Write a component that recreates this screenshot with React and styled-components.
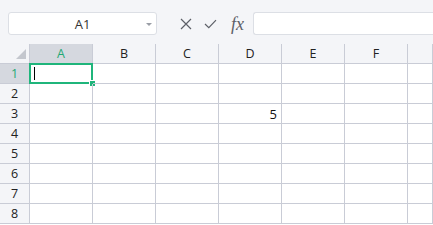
import React from 'react';
import styled, { createGlobalStyle } from 'styled-components';

const GlobalStyle = createGlobalStyle`
    html, body {
        margin: 0;
        padding: 0;
        background: #ffffff;
        overflow: hidden;
    }
    body {
        font-family: "Open Sans", "Noto Sans", sans-serif;
    }
`;

const columns = ['A', 'B', 'C', 'D', 'E', 'F', ''];
const rows = [1, 2, 3, 4, 5, 6, 7, 8];
const values = { D3: '5' };

const Page = styled.div`
    width: 433px;
    height: 225px;
    overflow: hidden;
    display: flex;
    flex-direction: column;
`;

const Toolbar = styled.div`
    height: 44px;
    box-sizing: border-box;
    padding: 12px 0 9px 8px;
    background: #f4f5f8;
    display: flex;
    align-items: stretch;
`;

const NameBox = styled.div`
    width: 149px;
    box-sizing: border-box;
    background: #fff;
    border: 1px solid #dcdfe5;
    border-radius: 3px;
    display: flex;
    align-items: center;
    justify-content: center;
    position: relative;
    font-size: 13px;
    color: #333;
`;

const Caret = styled.span`
    position: absolute;
    right: 4px;
    top: 10px;
    width: 0;
    height: 0;
    border-left: 3px solid transparent;
    border-right: 3px solid transparent;
    border-top: 3px solid #9a9ea6;
`;

const Actions = styled.div`
    display: flex;
    align-items: center;
    gap: 12px;
    padding: 0 9px 0 23px;
    color: #5d6068;
`;

const Fx = styled.span`
    font-family: "Liberation Serif", serif;
    font-style: italic;
    font-size: 18px;
    color: #5d6068;
    margin-left: 2px;
    line-height: 1;
`;

const FormulaBox = styled.div`
    flex: 1;
    background: #fff;
    border: 1px solid #dcdfe5;
    border-right: none;
    border-radius: 3px 0 0 3px;
`;

const Sheet = styled.div`
    display: grid;
    grid-template-columns: 30px repeat(6, 63px) 1fr;
    grid-auto-rows: 20px;
`;

const Cell = styled.div`
    box-sizing: border-box;
    border-right: 1px solid #c9ccd6;
    border-bottom: 1px solid #c9ccd6;
    position: relative;
    font-size: 13px;
    display: flex;
    align-items: center;
    justify-content: flex-end;
    padding-right: 4px;
    color: #111;
`;

const Header = styled(Cell)`
    background: ${p => (p.$active ? '#d5d8df' : '#f4f5f8')};
    color: ${p => (p.$active ? '#1fa873' : '#222')};
    justify-content: center;
    padding: 0;
    font-size: 12.5px;
`;

const Corner = styled(Header)`
    background: #f4f5f8;
`;

const Triangle = styled.span`
    position: absolute;
    right: 3px;
    bottom: 4px;
    width: 0;
    height: 0;
    border-left: 10px solid transparent;
    border-bottom: 10px solid #c4c7ce;
`;

const Selection = styled.div`
    position: absolute;
    left: -1px;
    top: -1px;
    right: -1px;
    bottom: -1px;
    border: 2px solid #1fb57b;
    pointer-events: none;
`;

const Handle = styled.span`
    position: absolute;
    right: -4px;
    bottom: -4px;
    width: 5px;
    height: 5px;
    background: #1fb57b;
    border: 1px solid #fff;
    border-right: none;
    border-bottom: none;
`;

const TextCursor = styled.span`
    position: absolute;
    left: 3px;
    top: 2px;
    bottom: 2px;
    width: 1px;
    background: #000;
`;

function CloseIcon() {
    return (
        <svg width="12" height="12" viewBox="0 0 12 12">
            <path d="M1 1 L11 11 M11 1 L1 11" stroke="#5d6068" strokeWidth="1.2" fill="none" />
        </svg>
    );
}

function CheckIcon() {
    return (
        <svg width="13" height="10" viewBox="0 0 13 10">
            <path d="M1 5 L4.8 8.6 L12 1.2" stroke="#5d6068" strokeWidth="1.2" fill="none" />
        </svg>
    );
}

export default function App() {
    return (
        <Page>
            <GlobalStyle />
            <Toolbar>
                <NameBox>
                    A1
                    <Caret />
                </NameBox>
                <Actions>
                    <CloseIcon />
                    <CheckIcon />
                    <Fx>fx</Fx>
                </Actions>
                <FormulaBox />
            </Toolbar>

            <Sheet>
                <Corner><Triangle /></Corner>
                {columns.map((c, i) => (
                    <Header key={'h' + i} $active={c === 'A'}>{c}</Header>
                ))}

                {rows.map(r => (
                    <React.Fragment key={r}>
                        <Header $active={r === 1}>{r}</Header>
                        {columns.map((c, i) => {
                            const id = c + r;
                            return (
                                <Cell key={id + i}>
                                    {c && values[id]}
                                    {id === 'A1' && (
                                        <Selection>
                                            <TextCursor />
                                            <Handle />
                                        </Selection>
                                    )}
                                </Cell>
                            );
                        })}
                    </React.Fragment>
                ))}
            </Sheet>
        </Page>
    );
}
